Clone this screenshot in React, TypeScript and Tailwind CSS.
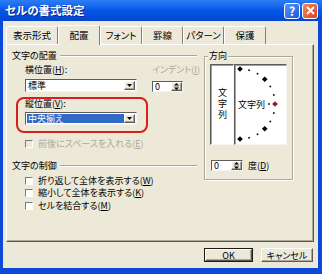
import type { ReactNode } from 'react';

const SUNKEN = 'border border-t-[#5c5c5c] border-l-[#5c5c5c] border-r-[#f6f5f0] border-b-[#f6f5f0]';
const RAISED =
  'border border-t-white border-l-white border-r-[#5a5a5a] border-b-[#5a5a5a] shadow-[inset_-1px_-1px_0_#aca899]';

const TABS = [
  { label: '表示形式', w: 'w-[52px]' },
  { label: '配置', w: 'w-[42px]', active: true },
  { label: 'フォント', w: 'w-[42px]' },
  { label: '罫線', w: 'w-[41px]' },
  { label: 'パターン', w: 'w-[41px]' },
  { label: '保護', w: 'w-[42px]' },
];

function DownArrow() {
  return (
    <svg width="5" height="3" viewBox="0 0 5 3">
      <polygon points="0,0 5,0 2.5,3" fill="#000" />
    </svg>
  );
}

function Combo({ value, selected }: { value: string; selected?: boolean }) {
  return (
    <div className={`flex h-[13px] w-[112px] bg-white p-px ${SUNKEN}`}>
      <div
        className={`flex-1 pl-[1px] leading-[9px] ${selected ? 'bg-[#316ac5] text-white' : 'text-black'}`}
      >
        {value}
      </div>
      <div className={`flex w-[11px] items-center justify-center bg-[#ece9d8] ${RAISED}`}>
        <DownArrow />
      </div>
    </div>
  );
}

function Spinner({ w }: { w: string }) {
  return (
    <div className={`flex h-[11px] ${w} bg-white ${SUNKEN}`}>
      <div className="flex-1 pl-[2px] leading-[9px]">0</div>
      <div className={`flex w-[11px] flex-col items-center justify-center gap-[1px] bg-[#ece9d8] ${RAISED}`}>
        <svg width="5" height="7" viewBox="0 0 5 7">
          <polygon points="2.5,0 5,2.5 0,2.5" fill="#000" />
          <rect x="0" y="3.2" width="5" height="0.6" fill="#8a8a8a" />
          <polygon points="0,4.5 5,4.5 2.5,7" fill="#000" />
        </svg>
      </div>
    </div>
  );
}

function GroupHead({ label }: { label: string }) {
  return (
    <div className="flex h-[11px] items-center whitespace-nowrap">
      <span>{label}</span>
      <div className="ml-[3px] h-[2px] flex-1 border-t border-b border-t-[#aca899] border-b-white" />
    </div>
  );
}

function Check({ label, accel, disabled, className = '' }: { label: string; accel: string; disabled?: boolean; className?: string }) {
  return (
    <div className={`ml-[13px] flex h-[11px] items-center gap-[5px] whitespace-nowrap ${className}`}>
      <span
        className={`h-[8px] w-[8px] border border-t-[#7a7a7a] border-l-[#7a7a7a] border-r-white border-b-white ${
          disabled ? 'bg-[#ece9d8]' : 'bg-white'
        }`}
      />
      <span className={disabled ? 'text-[#aca899]' : 'text-black'}>
        {label}(<span className="underline">{accel}</span>)
      </span>
    </div>
  );
}

function Label({ children, className = '' }: { children: ReactNode; className?: string }) {
  return <div className={`h-[11px] whitespace-nowrap leading-[11px] ${className}`}>{children}</div>;
}

function Dial() {
  const pts = Array.from({ length: 13 }, (_, i) => {
    const a = ((90 - 15 * i) * Math.PI) / 180;
    return { i, x: 5 + 35 * Math.cos(a), y: 39 - 35 * Math.sin(a) };
  });
  return (
    <svg width="51" height="79" viewBox="0 0 51 79">
      {pts.map(({ i, x, y }) =>
        i % 3 === 0 ? (
          <polygon
            key={i}
            points={`${x},${y - 2.8} ${x + 2.8},${y} ${x},${y + 2.8} ${x - 2.8},${y}`}
            fill={i === 6 ? '#8e1c24' : '#000'}
          />
        ) : (
          <rect key={i} x={x - 0.8} y={y - 0.8} width="1.6" height="1.6" fill="#000" />
        ),
      )}
      <rect x="33.2" y="38.2" width="1.6" height="1.6" fill="#000" />
      <text x="3" y="42.5" fontSize="9" fill="#000" fontFamily="'Noto Sans CJK JP', sans-serif">
        文字列
      </text>
    </svg>
  );
}

export default function App() {
  return (
    <div className="flex h-[274px] w-[322px] flex-col bg-[#0b4ad6] font-['Noto_Sans_CJK_JP','Noto_Sans',sans-serif] text-[9px] leading-[11px] text-black [font-feature-settings:'palt']">
      {/* title bar */}
      <div className="flex h-[21px] items-center bg-linear-to-b from-[#2d7df5] via-[#0657e8] to-[#0345cf] pl-[5px] pr-[4px]">
        <span className="text-[11.5px] font-bold text-white [text-shadow:1px_1px_0_#0a2a8a]">セルの書式設定</span>
        <div className="ml-auto flex gap-[2px]">
          <div className="flex h-[16px] w-[16px] items-center justify-center rounded-[3px] border border-white bg-linear-to-br from-[#5b93f5] to-[#1d58da] text-[12px] font-bold leading-none text-white">
            ?
          </div>
          <div className="flex h-[16px] w-[16px] items-center justify-center rounded-[3px] border border-white bg-linear-to-br from-[#f08a62] to-[#d5421c]">
            <svg width="9" height="9" viewBox="0 0 9 9">
              <path d="M1 1 L8 8 M8 1 L1 8" stroke="#fff" strokeWidth="1.8" />
            </svg>
          </div>
        </div>
      </div>

      {/* client area */}
      <div className="relative mb-[6px] ml-[3px] mr-[4px] flex flex-1 flex-col bg-[#ece9d8] pl-[3px] pt-[5px]">
        <div className="flex h-[18px] items-end">
          {TABS.map((t) => (
            <div
              key={t.label}
              className={`flex ${t.w} items-center justify-center rounded-t-[2px] border-l border-r border-t border-l-white border-r-[#808080] border-t-white bg-[#ece9d8] text-[9.5px] ${
                t.active ? 'relative z-10 -mb-px h-[20px]' : 'h-[18px]'
              }`}
            >
              {t.label}
            </div>
          ))}
        </div>

        {/* tab panel */}
        <div className="flex h-[198px] w-[308px] border border-b-[#5a5a5a] border-l-white border-r-[#5a5a5a] border-t-white shadow-[inset_-1px_-1px_0_#aca899]">
          <div className="flex w-[190px] shrink-0 flex-col pl-[5px] pt-[5px]">
            <GroupHead label="文字の配置" />
            <div className="mt-[3px] flex">
              <Label className="ml-[13px] w-[127px] shrink-0">
                横位置(<span className="underline">H</span>):
              </Label>
              <Label className="text-[#aca899]">
                インデント(<span className="underline">I</span>)
              </Label>
            </div>
            <div className="mt-[4px] flex items-end">
              <div className="ml-[13px]">
                <Combo value="標準" />
              </div>
              <div className="ml-[15px]">
                <Spinner w="w-[31px]" />
              </div>
            </div>
            <Label className="ml-[13px] mt-[6px]">
              縦位置(<span className="underline">V</span>):
            </Label>
            <div className="ml-[13px] mt-[3px]">
              <Combo value="中央揃え" selected />
            </div>
            <Check className="mt-[13px]" label="前後にスペースを入れる" accel="E" disabled />
            <div className="mt-[11px]">
              <GroupHead label="文字の制御" />
            </div>
            <Check className="mt-[4px]" label="折り返して全体を表示する" accel="W" />
            <Check className="mt-[1px]" label="縮小して全体を表示する" accel="K" />
            <Check className="mt-[2px]" label="セルを結合する" accel="M" />
          </div>

          {/* orientation */}
          <div className="relative ml-[7px] mt-[11px] h-[124px] w-[89px] border border-[#aca899] pl-[5px] pt-[7px] shadow-[inset_1px_1px_0_white,1px_1px_0_white]">
            <span className="absolute left-[3px] top-[-7px] bg-[#ece9d8] px-[1px] leading-[11px]">方向</span>
            <div className="flex">
              <div
                className={`flex h-[81px] w-[24px] items-center justify-center bg-white ${SUNKEN} shadow-[inset_1px_1px_0_#a0a0a0]`}
              >
                <span className="leading-[10px] tracking-[2px] [text-orientation:upright] [writing-mode:vertical-rl]">
                  文字列
                </span>
              </div>
              <div className={`h-[81px] w-[53px] bg-white ${SUNKEN} shadow-[inset_1px_1px_0_#a0a0a0]`}>
                <Dial />
              </div>
            </div>
            <div className="mt-[15px] flex items-center pl-[1px]">
              <Spinner w="w-[32px]" />
              <span className="ml-[5px]">
                度(<span className="underline">D</span>)
              </span>
            </div>
          </div>
        </div>

        {/* buttons */}
        <div className="mr-[5px] mt-[6px] flex justify-end gap-[8px]">
          <div className="h-[14px] w-[49px] border border-[#1a1a1a]">
            <div className={`flex h-full items-center justify-center bg-[#ece9d8] ${RAISED}`}>OK</div>
          </div>
          <div className={`flex h-[14px] w-[52px] items-center justify-center bg-[#ece9d8] ${RAISED}`}>キャンセル</div>
        </div>

        {/* red annotations */}
        <div className="pointer-events-none absolute left-[57px] top-[6px] h-[17px] w-[38px] rounded-[50%] border-2 border-[#d81e1e]" />
        <div className="pointer-events-none absolute left-[13px] top-[76px] h-[36px] w-[132px] rounded-[8px] border-2 border-[#d81e1e]" />
      </div>
    </div>
  );
}
